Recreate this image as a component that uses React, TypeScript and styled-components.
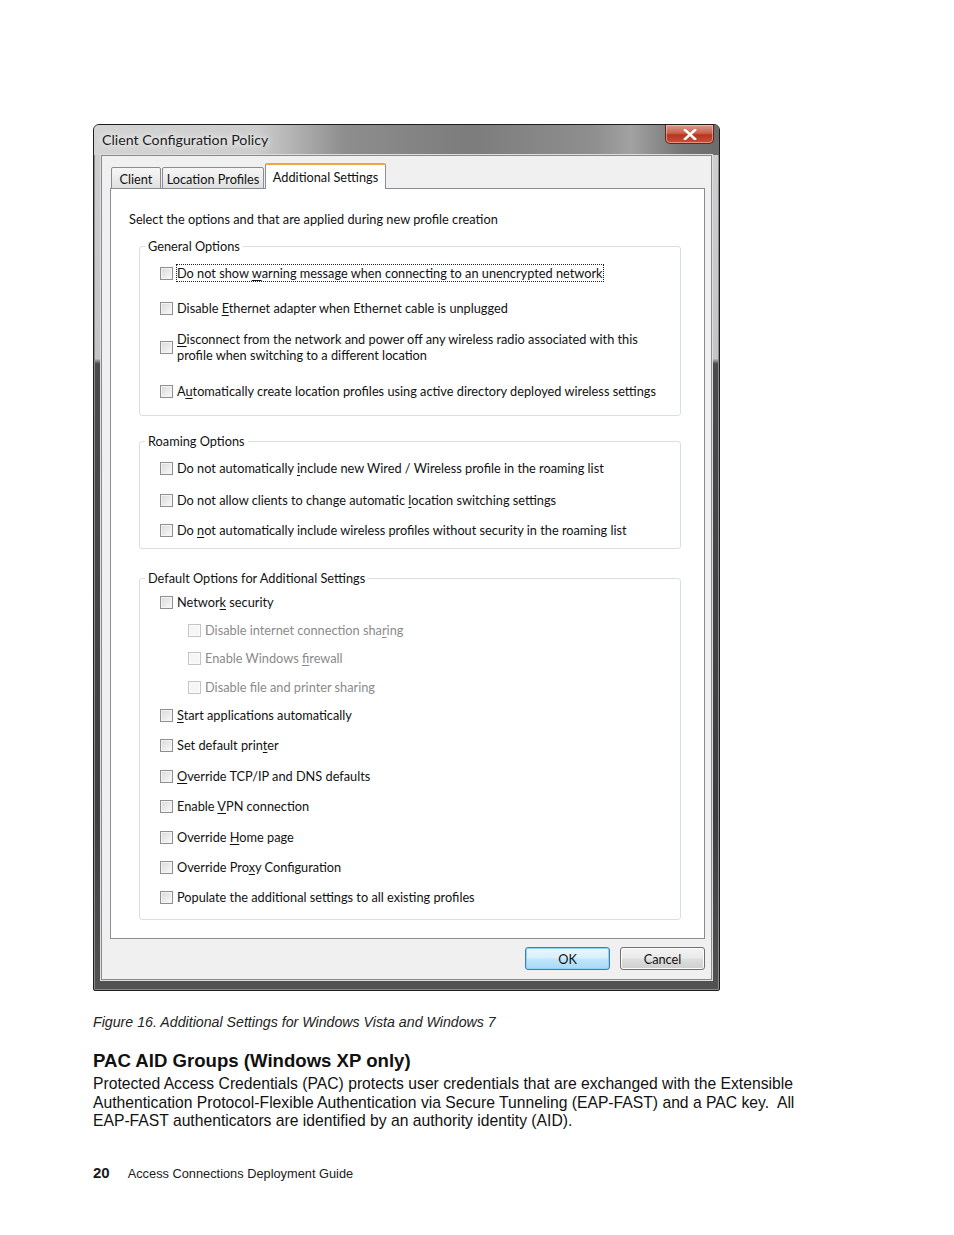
import { FC, Fragment } from 'react'
import styled, { createGlobalStyle } from 'styled-components'

const GlobalStyle = createGlobalStyle`
  html, body {
    margin: 0;
    padding: 0;
    background: #ffffff;
  }
  body {
    font-family: 'Liberation Sans', Arial, sans-serif;
    color: #1a1a1a;
  }
`

const UI_FONT = `Lato, 'Open Sans', sans-serif`

interface Option {
  label: string
  gap: number
  indent?: boolean
  disabled?: boolean
  focused?: boolean
}

interface Group {
  title: string
  top: number
  padTop: number
  padBottom: number
  options: Option[]
}

const tabs = [
  { label: 'Client', width: 50 },
  { label: 'Location Profiles', width: 102 },
  { label: 'Additional Settings', width: 121, active: true }
]

const groups: Group[] = [
  {
    title: 'General Options',
    top: 11,
    padTop: 11,
    padBottom: 16,
    options: [
      { label: 'Do not show &warning message when connecting to an unencrypted network', gap: 0, focused: true },
      { label: 'Disable &Ethernet adapter when Ethernet cable is unplugged', gap: 19 },
      {
        label:
          '&Disconnect from the network and power off any wireless radio associated with this\nprofile when switching to a different location',
        gap: 15
      },
      { label: 'A&utomatically create location profiles using active directory deployed wireless settings', gap: 20 }
    ]
  },
  {
    title: 'Roaming Options',
    top: 17,
    padTop: 11,
    padBottom: 10,
    options: [
      { label: 'Do not automatically &include new Wired / Wireless profile in the roaming list', gap: 0 },
      { label: 'Do not allow clients to change automatic &location switching settings', gap: 16 },
      { label: 'Do &not automatically include wireless profiles without security in the roaming list', gap: 14 }
    ]
  },
  {
    title: 'Default Options for Additional Settings',
    top: 21,
    padTop: 8,
    padBottom: 14,
    options: [
      { label: 'Networ&k security', gap: 0 },
      { label: 'Disable internet connection sha&ring', gap: 12, indent: true, disabled: true },
      { label: 'Enable Windows &firewall', gap: 12, indent: true, disabled: true },
      { label: 'Disable file and printer sharing', gap: 13, indent: true, disabled: true },
      { label: '&Start applications automatically', gap: 12 },
      { label: 'Set default prin&ter', gap: 14 },
      { label: '&Override TCP/IP and DNS defaults', gap: 15 },
      { label: 'Enable &VPN connection', gap: 14 },
      { label: 'Override &Home page', gap: 15 },
      { label: 'Override Pro&xy Configuration', gap: 14 },
      { label: 'Populate the additional settings to all existing profiles', gap: 14 }
    ]
  }
]

// renders "&x" as an underlined access key, "\n" as a line break
const AccessLabel: FC<{ text: string }> = ({ text }) => {
  const lines = text.split('\n')
  return (
    <>
      {lines.map((line, li) => {
        const idx = line.indexOf('&')
        return (
          <Fragment key={li}>
            {li > 0 && <br />}
            {idx < 0 ? (
              line
            ) : (
              <>
                {line.slice(0, idx)}
                <Key>{line.charAt(idx + 1)}</Key>
                {line.slice(idx + 2)}
              </>
            )}
          </Fragment>
        )
      })}
    </>
  )
}

const CloseGlyph = () => (
  <svg width="14" height="11" viewBox="0 0 14 11">
    <path d="M2 1 L12 10 M12 1 L2 10" stroke="#ffffff" strokeWidth="2.6" strokeLinecap="square" fill="none" />
  </svg>
)

const App: FC = () => {
  return (
    <>
      <GlobalStyle />
      <Page>
        <Window>
          <TitleBar>
            <Title>Client Configuration Policy</Title>
            <CloseButton>
              <CloseGlyph />
            </CloseButton>
          </TitleBar>
          <Client>
            <TabStrip>
              {tabs.map((t) => (
                <Tab key={t.label} $active={!!t.active} style={{ width: t.width }}>
                  {t.label}
                </Tab>
              ))}
            </TabStrip>
            <TabPanel>
              <Intro>Select the options and that are applied during new profile creation</Intro>
              {groups.map((g) => (
                <GroupBox key={g.title} $top={g.top} $padTop={g.padTop} $padBottom={g.padBottom}>
                  <GroupLegend>{g.title}</GroupLegend>
                  {g.options.map((o) => (
                    <CheckRow key={o.label} $gap={o.gap} $indent={!!o.indent}>
                      <CheckBox $disabled={!!o.disabled} />
                      <CheckLabel $disabled={!!o.disabled} $focused={!!o.focused}>
                        <AccessLabel text={o.label} />
                      </CheckLabel>
                    </CheckRow>
                  ))}
                </GroupBox>
              ))}
            </TabPanel>
            <ButtonBar>
              <DialogButton $default>OK</DialogButton>
              <DialogButton>Cancel</DialogButton>
            </ButtonBar>
          </Client>
        </Window>

        <Caption>Figure 16. Additional Settings for Windows Vista and Windows 7</Caption>
        <Heading>PAC AID Groups (Windows XP only)</Heading>
        <Body>
          Protected Access Credentials (PAC) protects user credentials that are exchanged with the Extensible
          <br />
          Authentication Protocol-Flexible Authentication via Secure Tunneling (EAP-FAST) and a PAC key.&nbsp; All
          <br />
          EAP-FAST authenticators are identified by an authority identity (AID).
        </Body>
        <Footer>
          <PageNumber>20</PageNumber>
          <FooterTitle>Access Connections Deployment Guide</FooterTitle>
        </Footer>
      </Page>
    </>
  )
}

const Page = styled.div`
  width: 954px;
  min-height: 1235px;
  box-sizing: border-box;
  padding: 124px 0 0 93px;
  display: flex;
  flex-direction: column;
  align-items: flex-start;
`

const Window = styled.div`
  width: 627px;
  box-sizing: border-box;
  display: flex;
  flex-direction: column;
  padding: 0 7px 10px 7px;
  border: 1px solid #1e1e1e;
  border-radius: 6px 6px 2px 2px;
  background: linear-gradient(
    180deg,
    #cfcfcf 0%,
    #c4c4c4 27%,
    #4a4a4a 27.6%,
    #3e3e3e 80%,
    #525252 100%
  );
  box-shadow: inset 0 0 0 1px #8c8c8c;
  font-family: ${UI_FONT};
`

const TitleBar = styled.div`
  height: 30px;
  margin: 0 -7px;
  padding: 0 5px 0 8px;
  display: flex;
  align-items: flex-start;
  justify-content: space-between;
  border-radius: 5px 5px 0 0;
  background: linear-gradient(
    90deg,
    #d4d4d4 0%,
    #cdcdcd 26%,
    #8e8e8e 40%,
    #7c7c7c 60%,
    #8f8f8f 80%,
    #a2a2a2 86%,
    #767676 94%,
    #6c6c6c 100%
  );
`

const Title = styled.div`
  font-size: 14.2px;
  line-height: 30px;
  color: #1c1c1c;
  text-shadow: 0 0 8px #ffffff, 0 0 4px #f0f0f0;
`

const CloseButton = styled.div`
  width: 49px;
  height: 19px;
  display: flex;
  align-items: center;
  justify-content: center;
  box-sizing: border-box;
  border: 1px solid #5a2a22;
  border-top: none;
  border-radius: 0 0 5px 5px;
  background: linear-gradient(180deg, #d99a8c 0%, #c9634f 45%, #b8341f 55%, #c8533c 100%);
  box-shadow: inset 0 0 0 1px rgba(255, 210, 200, 0.5);
`

const Client = styled.div`
  display: flex;
  flex-direction: column;
  padding: 7px 6px 9px 8px;
  background: #f0f0f0;
  border: 1px solid #8a8a8a;
  box-shadow: 0 0 0 1px #dedede;
`

const TabStrip = styled.div`
  display: flex;
  align-items: flex-end;
  height: 26px;
  padding-left: 1px;
  position: relative;
  z-index: 1;
  margin-bottom: -1px;
`

const Tab = styled.div<{ $active: boolean }>`
  box-sizing: border-box;
  height: ${(p) => (p.$active ? 26 : 22)}px;
  padding-top: ${(p) => (p.$active ? 0 : 2)}px;
  margin-right: ${(p) => (p.$active ? 0 : 1)}px;
  display: flex;
  align-items: center;
  justify-content: center;
  font-size: 12.75px;
  white-space: nowrap;
  color: #111;
  border: 1px solid #898c95;
  border-bottom: ${(p) => (p.$active ? 'none' : '1px solid #898c95')};
  border-top: ${(p) => (p.$active ? '2px solid #f0a640' : '1px solid #898c95')};
  border-radius: 2px 2px 0 0;
  background: ${(p) => (p.$active ? '#ffffff' : 'linear-gradient(180deg, #f6f6f6 0%, #ececec 50%, #dfdfdf 100%)')};
`

const TabPanel = styled.div`
  background: #ffffff;
  border: 1px solid #898c95;
  padding: 22px 23px 18px 0;
  display: flex;
  flex-direction: column;
`

const Intro = styled.div`
  font-size: 12.75px;
  line-height: 16px;
  color: #111;
  margin-left: 18px;
`

const GroupBox = styled.fieldset<{ $top: number; $padTop: number; $padBottom: number }>`
  margin: ${(p) => p.$top}px 0 0 28px;
  padding: ${(p) => p.$padTop}px 8px ${(p) => p.$padBottom}px 20px;
  border: 1px solid #d5dfe5;
  border-radius: 3px;
  min-width: 0;
`

const GroupLegend = styled.legend`
  font-size: 12.75px;
  line-height: 16px;
  color: #111;
  padding: 0 3px;
  margin-left: -15px;
`

const CheckRow = styled.div<{ $gap: number; $indent: boolean }>`
  display: flex;
  align-items: center;
  gap: 4px;
  margin-top: ${(p) => p.$gap}px;
  margin-left: ${(p) => (p.$indent ? 28 : 0)}px;
`

const CheckBox = styled.div<{ $disabled: boolean }>`
  width: 13px;
  height: 13px;
  flex: none;
  box-sizing: border-box;
  border: 1px solid ${(p) => (p.$disabled ? '#c4c4c4' : '#8e8f8f')};
  background: ${(p) =>
    p.$disabled ? '#f6f6f6' : 'linear-gradient(135deg, #d8d8d8 0%, #ededed 60%, #fafafa 100%)'};
  box-shadow: inset 0 0 0 1px ${(p) => (p.$disabled ? '#fbfbfb' : '#f4f4f4')};
`

const CheckLabel = styled.div<{ $disabled: boolean; $focused: boolean }>`
  font-size: 12.75px;
  line-height: 16px;
  white-space: nowrap;
  color: ${(p) => (p.$disabled ? '#8a8a8a' : '#111')};
  outline: ${(p) => (p.$focused ? '1px dotted #222' : 'none')};
  outline-offset: 0;
`

const Key = styled.span`
  text-decoration: underline;
  text-underline-offset: 2px;
`

const ButtonBar = styled.div`
  display: flex;
  justify-content: flex-end;
  gap: 10px;
  margin-top: 8px;
`

const DialogButton = styled.div<{ $default?: boolean }>`
  width: 85px;
  height: 23px;
  box-sizing: border-box;
  display: flex;
  align-items: center;
  justify-content: center;
  font-size: 12.75px;
  color: #111;
  border-radius: 3px;
  border: 1px solid ${(p) => (p.$default ? '#3c7fb1' : '#707070')};
  background: ${(p) =>
    p.$default
      ? 'linear-gradient(180deg, #eaf6fd 0%, #d9f0fc 45%, #bee6fd 55%, #a7d9f5 100%)'
      : 'linear-gradient(180deg, #f2f2f2 0%, #ebebeb 45%, #dddddd 55%, #cfcfcf 100%)'};
  box-shadow: inset 0 0 0 1px ${(p) => (p.$default ? '#8fd3f5' : '#fcfcfc')};
`

const Caption = styled.div`
  margin-top: 23px;
  font-size: 14.2px;
  line-height: 16px;
  font-style: italic;
  color: #222;
`

const Heading = styled.h2`
  margin: 20px 0 0 0;
  font-size: 18.6px;
  line-height: 22px;
  font-weight: bold;
  color: #111;
`

const Body = styled.p`
  margin: 3px 0 0 0;
  font-size: 15.7px;
  line-height: 18.5px;
  color: #111;
`

const Footer = styled.div`
  margin-top: 33px;
  display: flex;
  align-items: baseline;
  gap: 18px;
`

const PageNumber = styled.span`
  font-size: 15px;
  font-weight: bold;
  line-height: 18px;
`

const FooterTitle = styled.span`
  font-size: 12.8px;
  line-height: 18px;
`

export default App
